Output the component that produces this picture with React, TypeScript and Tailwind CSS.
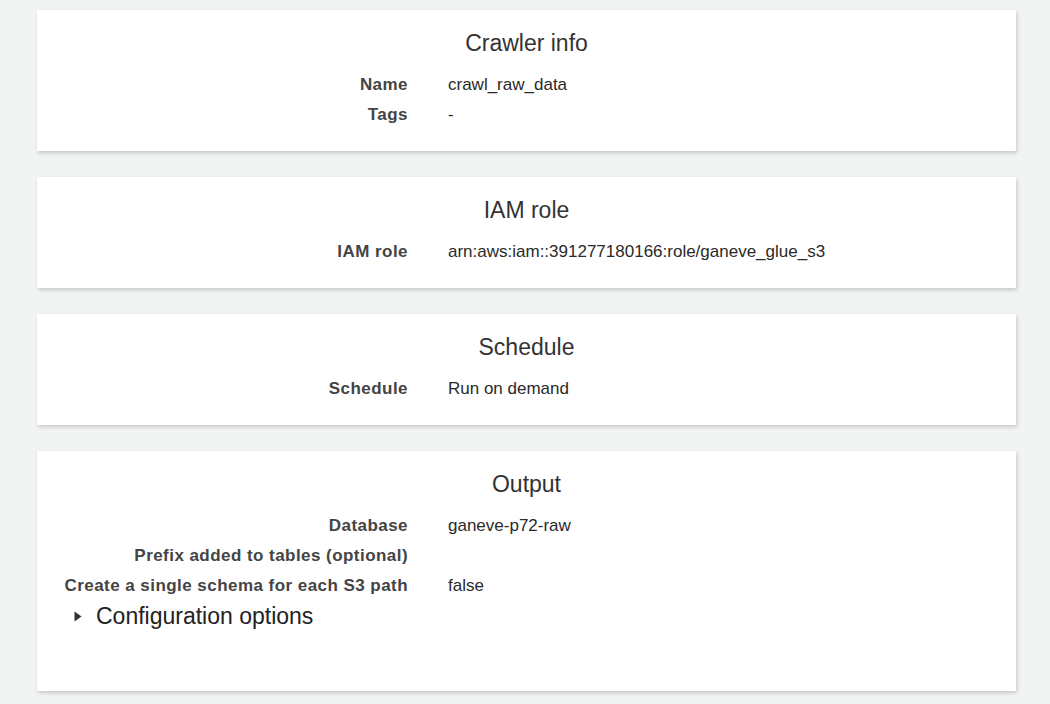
import React from "react";

type Row = { label: string; value: string };

function Card({ title, rows, children, extraClass }: { title: string; rows: Row[]; children?: React.ReactNode; extraClass?: string }) {
  return (
    <div className={"bg-white shadow-[1px_2px_4px_rgba(0,0,0,0.18)] pt-[20px] " + (extraClass ?? "pb-[21px]")}>
      <div className="text-center text-[23px] leading-[26px] text-[#333]">{title}</div>
      <div className="mt-[14px] flex flex-col">
        {rows.map((r) => (
          <div key={r.label} className="flex h-[30px] items-center">
            <div className="w-[371px] shrink-0 text-right text-[17px] font-bold tracking-[0.45px] text-[#444]">{r.label}</div>
            <div className="pl-[40px] text-[17px] text-[#2a2a2a]">{r.value}</div>
          </div>
        ))}
      </div>
      {children}
    </div>
  );
}

export default function App() {
  return (
    <div
      className="min-h-[704px] w-full bg-[#f2f3f3] pl-[37px] pr-[34px] pt-[10px]"
      style={{ fontFamily: '"Liberation Sans", Arial, sans-serif' }}
    >
      <div className="flex flex-col gap-[26px]">
        <Card
          title="Crawler info"
          rows={[
            { label: "Name", value: "crawl_raw_data" },
            { label: "Tags", value: "-" },
          ]}
        />
        <Card
          title="IAM role"
          rows={[{ label: "IAM role", value: "arn:aws:iam::391277180166:role/ganeve_glue_s3" }]}
        />
        <Card title="Schedule" rows={[{ label: "Schedule", value: "Run on demand" }]} />
        <Card
          title="Output"
          extraClass="pb-[60px]"
          rows={[
            { label: "Database", value: "ganeve-p72-raw" },
            { label: "Prefix added to tables (optional)", value: "" },
            { label: "Create a single schema for each S3 path", value: "false" },
          ]}
        >
          <div className="flex h-[30px] items-center pl-[37px] text-[23px] text-[#222]">
            <svg width="8" height="11" viewBox="0 0 8 11" className="mr-[14px]">
              <path d="M0.5 0.5 L7.5 5.5 L0.5 10.5 Z" fill="#333" />
            </svg>
            <span>Configuration options</span>
          </div>
        </Card>
      </div>
    </div>
  );
}
